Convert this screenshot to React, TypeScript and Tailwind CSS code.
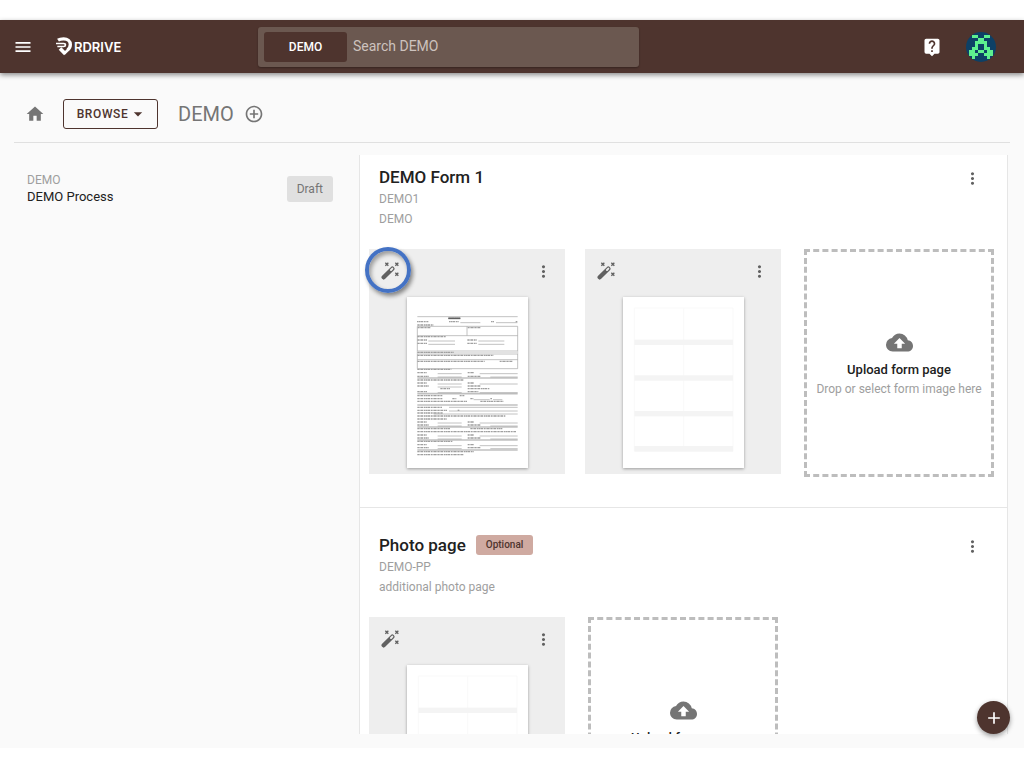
import type { ReactNode } from "react";
import {
  MdAdd,
  MdAddCircleOutline,
  MdArrowDropDown,
  MdCloudUpload,
  MdHome,
  MdLiveHelp,
  MdMenu,
  MdMoreVert,
} from "react-icons/md";

const avatarRows = [
  ".##..##.",
  "...##...",
  "..####..",
  "..#..#..",
  ".##..##.",
  "##.##.##",
  "###..###",
  ".#....#.",
];

// x, y, width of each line of small print on the form thumbnail
const print: number[][] = [
  [124, 64, 36], [30, 74, 34], [126, 74, 30], [252, 74, 10], [326, 74, 5],
  [31, 84, 48], [32, 92, 40], [182, 92, 38], [31, 119, 86], [31, 129, 30],
  [31, 139, 30], [181, 129, 28], [181, 139, 28], [31, 166, 110],
  [31, 175, 228], [31, 193, 202], [278, 193, 40], [31, 217, 102],
  [31, 227, 28], [182, 227, 18], [31, 238, 34], [182, 238, 38],
  [31, 249, 140], [31, 258, 28], [182, 258, 18], [31, 267, 34],
  [182, 267, 38], [100, 275, 30], [182, 275, 66], [31, 284, 30],
  [182, 284, 32], [31, 296, 75], [158, 296, 14], [31, 305, 75],
  [136, 305, 12], [190, 305, 10], [250, 305, 6], [31, 313, 150],
  [220, 313, 70], [31, 331, 74], [31, 340, 90], [152, 340, 5],
  [31, 348, 76], [31, 357, 264], [31, 366, 88], [31, 375, 28],
  [182, 375, 18], [31, 384, 34], [182, 384, 38], [31, 395, 100],
  [190, 395, 96], [31, 404, 296], [31, 414, 28], [182, 414, 18],
  [31, 423, 34], [182, 423, 38], [31, 433, 105], [31, 443, 28],
  [182, 443, 18], [31, 452, 34], [182, 452, 38], [31, 464, 170],
  [31, 473, 140],
];

const rules: number[][] = [
  [160, 77, 60], [267, 77, 64], [64, 132, 80], [64, 142, 80],
  [214, 132, 78], [214, 142, 78], [92, 230, 72], [218, 230, 114],
  [92, 240, 72], [250, 240, 82], [92, 261, 72], [218, 261, 114],
  [92, 270, 72], [92, 287, 72], [218, 287, 114], [200, 308, 48],
  [258, 308, 28], [126, 331, 206], [126, 342, 206], [80, 351, 252],
  [92, 378, 72], [218, 378, 114], [92, 387, 72], [250, 387, 82],
  [92, 417, 72], [218, 417, 114], [92, 426, 72], [250, 426, 82],
  [92, 446, 72], [218, 446, 114], [92, 455, 72], [250, 455, 82],
];

const bands = [243, 290, 324, 390, 429, 459];

function Avatar() {
  return (
    <svg viewBox="0 0 30 30" className="size-[30px] rounded-full bg-[#0d4066]">
      {avatarRows.map((row, y) =>
        row
          .split("")
          .map((cell, x) =>
            cell === "#" ? (
              <rect
                key={`${x}-${y}`}
                x={3 + x * 3}
                y={3 + y * 3}
                width="3"
                height="3"
                fill="#5ef08f"
              />
            ) : null,
          ),
      )}
    </svg>
  );
}

function Logo() {
  return (
    <a href="#home" className="flex items-center text-white">
      <svg viewBox="0 0 48 56" className="h-[19px] w-4" fill="none" stroke="currentColor">
        <path d="M6 9C12 5 17 5 23 5c12 0 20 7 20 17 0 7-3 12-8 16" strokeWidth="10" />
        <path d="M0 19h23c7 0 7 9 0 9H4" strokeWidth="5" />
        <path d="m12 34 16 16" strokeWidth="11" />
        <path d="m24 50 13-13" strokeWidth="8" />
      </svg>
      <span className="ml-0.5 font-[Inter] text-[13px] leading-4 font-semibold">RDRIVE</span>
    </a>
  );
}

function WandIcon() {
  return (
    <svg viewBox="0 0 54 54" className="size-[18px]" fill="none" stroke="#616161">
      <path d="M8 46 34 20" strokeWidth="13" strokeLinecap="round" />
      <path d="m30 24 4-4" stroke="#eeeeee" strokeWidth="6" strokeLinecap="round" />
      <path
        d="m13 2 9 9m0-9-9 9M43 2l9 9m0-9-9 9M43 32l9 9m0-9-9 9"
        strokeWidth="4"
      />
    </svg>
  );
}

function FormSheet() {
  return (
    <svg viewBox="0 0 363 513" className="h-[171px] w-full bg-white shadow-[0_1px_3px_rgba(0,0,0,0.35)]">
      <g stroke="#a3a3a3" strokeWidth="2" fill="none">
        <path d="M31 59H332" />
        <path d="M31 88H332V215H31ZM180 88V116M31 116H332M31 162H332" />
        <path d="M31 171H332M31 188H332" />
      </g>
      <path d="M31 162h301v9H31z" fill="#e2e2e2" />
      {bands.map((y) => (
        <path key={y} d={`M31 ${y}H332`} stroke="#c0c0c0" strokeWidth="5" />
      ))}
      {print.map(([x, y, w]) => (
        <path
          key={`${x}-${y}`}
          d={`M${x} ${y}h${w}`}
          stroke="#a0a0a0"
          strokeWidth="4"
          strokeDasharray="5 1 3 1 8 2"
        />
      ))}
      <path d="M124 64h36" stroke="#606060" strokeWidth="5" />
      {rules.map(([x, y, w]) => (
        <path key={`${x}-${y}`} d={`M${x} ${y}h${w}`} stroke="#a3a3a3" strokeWidth="2" />
      ))}
    </svg>
  );
}

function PhotoSheet() {
  return (
    <svg viewBox="0 0 363 513" className="h-[171px] w-full bg-white shadow-[0_1px_3px_rgba(0,0,0,0.35)]">
      <path d="M34 33H330V463H34ZM182 33V463" fill="none" stroke="#f9f9f9" strokeWidth="3" />
      {[128, 235, 342, 447].map((y) => (
        <rect key={y} x="34" y={y} width="296" height="16" fill="#f4f4f4" />
      ))}
    </svg>
  );
}

function PageCard({ children, marked }: { children: ReactNode; marked?: boolean }) {
  return (
    <div className="relative h-[225px] w-[196px] shrink-0 bg-[#eeeeee]">
      <div className="flex h-12 items-center justify-between px-3 pb-1">
        <button aria-label="Auto detect fields">
          <WandIcon />
        </button>
        <button aria-label="Page menu">
          <MdMoreVert className="size-[19px] text-[#616161]" />
        </button>
      </div>
      <div className="mx-auto w-[121px]">{children}</div>
      {marked && (
        <span className="pointer-events-none absolute -top-0.5 -left-1 size-[46px] rounded-full border-4 border-[#4472c4] shadow-[2px_3px_4px_rgba(0,0,0,0.45),inset_2px_3px_4px_rgba(0,0,0,0.35)]" />
      )}
    </div>
  );
}

function UploadBox() {
  return (
    <button className="ml-[3px] flex h-[228px] w-[190px] shrink-0 flex-col items-center justify-center border-[3px] border-dashed border-[#bdbdbd]">
      <MdCloudUpload className="size-[27px] text-[#757575]" />
      <span className="mt-1 text-[13px] leading-5 font-medium text-[#212121]">
        Upload form page
      </span>
      <span className="text-xs leading-[18px] whitespace-nowrap text-[#9e9e9e]">
        Drop or select form image here
      </span>
    </button>
  );
}

type FormSectionProps = {
  title: string;
  code: string;
  description: string;
  optional?: boolean;
  children: ReactNode;
};

function FormSection({ title, code, description, optional, children }: FormSectionProps) {
  return (
    <section className="pl-[9px]">
      <div className="flex h-[94px] justify-between pt-2.5 pr-[25px] pl-2.5">
        <div>
          <div className="flex h-6 items-center gap-2.5">
            <h2 className="text-[17px] leading-6 font-medium text-[#212121]">{title}</h2>
            {optional && (
              <span className="rounded-[3px] bg-[#cfaaa1] px-2.5 text-[10px] leading-5 font-medium text-[#4e342e]">
                Optional
              </span>
            )}
          </div>
          <p className="text-xs leading-5 text-[#9e9e9e]">{code}</p>
          <p className="text-xs leading-5 text-[#9e9e9e]">{description}</p>
        </div>
        <button aria-label="Form menu" className="mt-[3px] h-5">
          <MdMoreVert className="size-[19px] text-[#616161]" />
        </button>
      </div>
      <div className="flex gap-5">{children}</div>
    </section>
  );
}

function App() {
  return (
    <div className="h-screen bg-white py-5 font-[Roboto,sans-serif]">
      <div className="relative flex h-full flex-col bg-[#fafafa]">
        <header className="flex h-[53px] shrink-0 items-center bg-[#4e342e] pr-7 shadow-[0_2px_5px_rgba(0,0,0,0.45)]">
          <div className="flex w-[258px] shrink-0 items-center">
            <button aria-label="Menu" className="mr-[23px] ml-[13px]">
              <MdMenu className="size-5 text-white" />
            </button>
            <Logo />
          </div>
          <div className="flex h-10 w-[381px] items-center rounded-[3px] bg-[#6b5850] pl-1.5 shadow-[0_1px_2px_rgba(0,0,0,0.3)]">
            <button className="h-[30px] w-[83px] rounded-[3px] bg-[#4e342e] text-xs font-medium text-white">
              DEMO
            </button>
            <input
              type="text"
              aria-label="Search DEMO"
              placeholder="Search DEMO"
              className="ml-1.5 min-w-0 flex-1 bg-transparent pb-0.5 text-sm text-white outline-none placeholder:text-[#cdc2be]"
            />
          </div>
          <div className="ml-auto flex items-center gap-6">
            <button aria-label="Help">
              <MdLiveHelp className="size-5 text-white" />
            </button>
            <button aria-label="Account">
              <Avatar />
            </button>
          </div>
        </header>

        <div className="mx-3.5 flex h-[70px] shrink-0 items-center border-b border-[#e0e0e0] pt-3 pl-[11px]">
          <a href="#home" aria-label="Home">
            <MdHome className="size-5 text-[#757575]" />
          </a>
          <button className="ml-[18px] flex h-[30px] w-[95px] items-center justify-center rounded-[3px] border border-[#4e342e] pl-1 text-xs font-medium tracking-wider text-[#4e342e]">
            BROWSE
            <MdArrowDropDown className="size-5" />
          </button>
          <h1 className="ml-5 text-xl text-[#757575]">DEMO</h1>
          <button aria-label="Add" className="ml-2.5">
            <MdAddCircleOutline className="size-5 text-[#757575]" />
          </button>
        </div>

        <main className="flex min-h-0 flex-1 pt-3 pr-[17px] pb-3.5">
          <aside className="w-[360px] shrink-0 pt-[17px] pr-[27px] pl-[27px]">
            <a href="#process" className="flex items-center justify-between">
              <span>
                <span className="block text-xs leading-4 text-[#9e9e9e]">DEMO</span>
                <span className="block text-[13px] leading-[18px] text-[#212121]">
                  DEMO Process
                </span>
              </span>
              <span className="rounded-[3px] bg-[#e0e0e0] px-2.5 text-xs leading-[26px] text-[#757575]">
                Draft
              </span>
            </a>
          </aside>

          {/* forms of the selected process */}
          <div className="min-w-0 flex-1 bg-white shadow-[-1px_0_0_#e6e6e6,1px_0_0_#e6e6e6]">
            <div className="h-full overflow-y-auto [scrollbar-width:none]">
              <FormSection title="DEMO Form 1" code="DEMO1" description="DEMO">
                <PageCard marked>
                  <FormSheet />
                </PageCard>
                <PageCard>
                  <PhotoSheet />
                </PageCard>
                <UploadBox />
              </FormSection>
              <hr className="mt-[30px] mb-[15px] border-[#e6e6e6]" />
              <FormSection
                title="Photo page"
                code="DEMO-PP"
                description="additional photo page"
                optional
              >
                <PageCard>
                  <PhotoSheet />
                </PageCard>
                <UploadBox />
              </FormSection>
            </div>
          </div>
        </main>

        <button
          aria-label="Add form"
          className="absolute right-[14px] bottom-[14px] flex size-[33px] items-center justify-center rounded-full bg-[#4e342e] text-white shadow-[0_2px_5px_rgba(0,0,0,0.4)]"
        >
          <MdAdd className="size-5" />
        </button>
      </div>
    </div>
  );
}

export default App;
